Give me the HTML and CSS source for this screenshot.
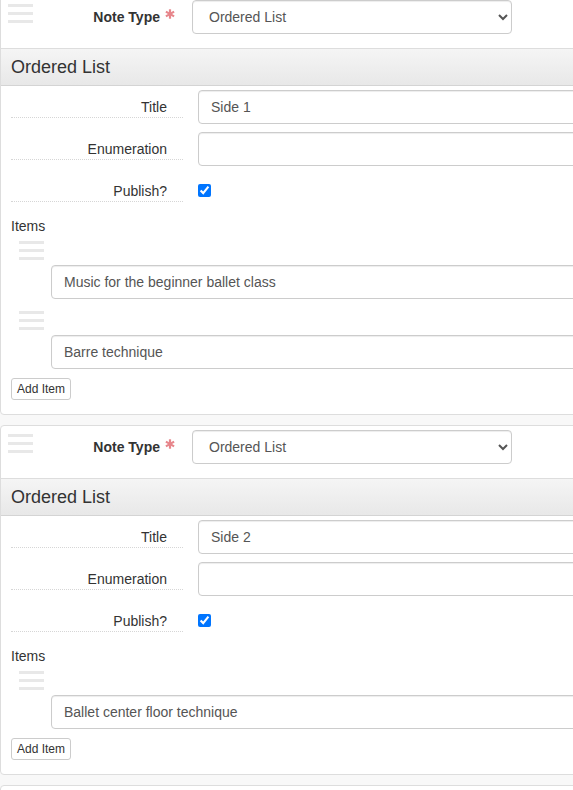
FILE: index.html
```html
<!DOCTYPE html>
<html lang="en">
<head>
<meta charset="utf-8">
<title>Notes</title>
<link rel="stylesheet" href="styles.css">
</head>
<body>
<div class="note-list">

  <div class="note-card">
    <div class="note-header">
      <span class="drag-handle"><i></i><i></i><i></i></span>
      <label class="note-type-label">Note Type<svg class="req" viewBox="0 0 10 10" width="10" height="10"><g stroke="#e7868b" stroke-width="2.2" stroke-linecap="butt"><line x1="5" y1="0.3" x2="5" y2="9.7"/><line x1="0.9" y1="2.6" x2="9.1" y2="7.4"/><line x1="0.9" y1="7.4" x2="9.1" y2="2.6"/></g></svg></label>
      <select class="type-select"><option>Ordered List</option></select>
    </div>
    <div class="panel-heading">Ordered List</div>
    <div class="fields">
      <div class="field-row">
        <label class="field-label">Title</label>
        <input class="form-control" type="text" value="Side 1">
      </div>
      <div class="field-row">
        <label class="field-label">Enumeration</label>
        <input class="form-control" type="text" value="">
      </div>
      <div class="field-row">
        <label class="field-label">Publish?</label>
        <div class="check-cell"><input class="check" type="checkbox" checked></div>
      </div>
      <div class="items-label">Items</div>
      <div class="item">
        <span class="drag-handle item-handle"><i></i><i></i><i></i></span>
        <input class="form-control item-input" type="text" value="Music for the beginner ballet class">
      </div>
      <div class="item">
        <span class="drag-handle item-handle"><i></i><i></i><i></i></span>
        <input class="form-control item-input" type="text" value="Barre technique">
      </div>
      <button class="btn-add" type="button">Add Item</button>
    </div>
  </div>

  <div class="note-card">
    <div class="note-header">
      <span class="drag-handle"><i></i><i></i><i></i></span>
      <label class="note-type-label">Note Type<svg class="req" viewBox="0 0 10 10" width="10" height="10"><g stroke="#e7868b" stroke-width="2.2" stroke-linecap="butt"><line x1="5" y1="0.3" x2="5" y2="9.7"/><line x1="0.9" y1="2.6" x2="9.1" y2="7.4"/><line x1="0.9" y1="7.4" x2="9.1" y2="2.6"/></g></svg></label>
      <select class="type-select"><option>Ordered List</option></select>
    </div>
    <div class="panel-heading">Ordered List</div>
    <div class="fields">
      <div class="field-row">
        <label class="field-label">Title</label>
        <input class="form-control" type="text" value="Side 2">
      </div>
      <div class="field-row">
        <label class="field-label">Enumeration</label>
        <input class="form-control" type="text" value="">
      </div>
      <div class="field-row">
        <label class="field-label">Publish?</label>
        <div class="check-cell"><input class="check" type="checkbox" checked></div>
      </div>
      <div class="items-label">Items</div>
      <div class="item">
        <span class="drag-handle item-handle"><i></i><i></i><i></i></span>
        <input class="form-control item-input" type="text" value="Ballet center floor technique">
      </div>
      <button class="btn-add" type="button">Add Item</button>
    </div>
  </div>

  <div class="note-card">
    <div class="note-header">
      <span class="drag-handle"><i></i><i></i><i></i></span>
    </div>
  </div>

</div>
</body>
</html>
```
FILE: styles.css
```css
html, body {
  margin: 0;
  padding: 0;
  overflow: hidden;
}
body {
  background: #f8f8f8;
  font-family: "Liberation Sans", Arial, sans-serif;
  font-size: 14px;
  color: #333;
}
.note-list {
  margin-top: -5px;
  width: 660px;
  display: flex;
  flex-direction: column;
  gap: 10px;
}
.note-card {
  background: #fff;
  border: 1px solid #ddd;
  border-radius: 4px;
  padding: 4px 0 14px 0;
}
.note-header {
  display: flex;
  align-items: flex-start;
  height: 34px;
  padding-left: 7px;
}
.drag-handle {
  display: flex;
  flex-direction: column;
  gap: 5px;
  width: 25px;
  margin-top: 4px;
  flex: none;
}
.drag-handle i {
  display: block;
  height: 3px;
  background: #e8e8e8;
}
.note-type-label {
  width: 142px;
  padding-right: 2px;
  display: flex;
  justify-content: flex-end;
  align-items: flex-start;
  font-weight: bold;
  line-height: 20px;
  padding-top: 7px;
}
.req {
  margin-left: 5px;
  margin-top: 2px;
}
.type-select {
  margin-left: 15px;
  width: 320px;
  height: 34px;
  padding: 6px 12px;
  font-family: "Liberation Sans", Arial, sans-serif;
  font-size: 14px;
  color: #555;
  background: #fff;
  border: 1px solid #ccc;
  border-radius: 4px;
  box-shadow: inset 0 1px 1px rgba(0,0,0,.075);
}
.panel-heading {
  margin-top: 14px;
  height: 36px;
  line-height: 36px;
  padding-left: 10px;
  font-size: 18px;
  color: #333;
  border-top: 1px solid #ddd;
  border-bottom: 1px solid #d4d4d4;
  background: linear-gradient(to bottom, #f5f5f5 0, #e8e8e8 100%);
}
.fields {
  padding: 4px 0 0 10px;
  display: flex;
  flex-direction: column;
}
.field-row {
  display: grid;
  grid-template-columns: 172px 1fr;
  column-gap: 15px;
  height: 34px;
  margin-bottom: 8px;
}
.field-label {
  height: 20px;
  line-height: 20px;
  padding: 7px 16px 0 0;
  text-align: right;
  border-bottom: 1px dotted #d6d6d6;
}
.form-control {
  box-sizing: border-box;
  height: 34px;
  padding: 6px 12px;
  font-family: "Liberation Sans", Arial, sans-serif;
  font-size: 14px;
  color: #555;
  background: #fff;
  border: 1px solid #ccc;
  border-radius: 4px;
  box-shadow: inset 0 1px 1px rgba(0,0,0,.075);
  outline: none;
  width: 100%;
  margin: 0;
}
.check-cell {
  padding-top: 10px;
}
.check {
  margin: 0;
  width: 13px;
  height: 13px;
  display: block;
}
.items-label {
  line-height: 20px;
}
.item {
  display: flex;
  flex-direction: column;
  padding-top: 5px;
  margin-bottom: 7px;
}
.item-handle {
  margin: 0 0 0 8px;
  align-self: flex-start;
}
.item-input {
  margin-top: 5px;
  margin-left: 40px;
  width: auto;
}
.btn-add {
  align-self: flex-start;
  margin-top: 2px;
  padding: 1px 5px;
  font-family: "Liberation Sans", Arial, sans-serif;
  font-size: 12px;
  line-height: 18px;
  color: #333;
  background: #fff;
  border: 1px solid #ccc;
  border-radius: 3px;
}
```
